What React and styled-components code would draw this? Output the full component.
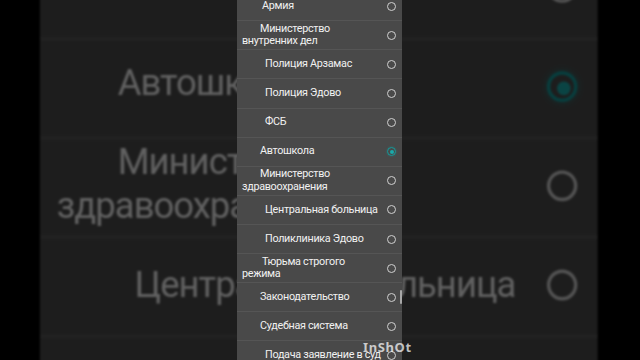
import React from 'react';
import styled, { createGlobalStyle } from 'styled-components';

const GlobalStyle = createGlobalStyle`
  html, body { margin: 0; padding: 0; background: #000; }
  body { font-family: Roboto, "Noto Sans", sans-serif; }
`;

const Stage = styled.div`
  position: relative;
  width: 640px;
  height: 360px;
  overflow: hidden;
  background: #000;
  display: grid;
  grid-template: 360px / 640px;
`;

const Layer = styled.div`
  grid-area: 1 / 1;
  display: flex;
  align-items: flex-start;
  padding-left: 222px;
`;

const Backdrop = styled(Layer)`
  transform: scale(3.38, 3.42);
  transform-origin: 319.8px 178.3px;
  filter: blur(0.35px) brightness(0.4);
`;

const Phone = styled.div`
  display: flex;
  height: 360px;
  background: #000;
  padding: 0 13px 0 15px;
`;

const Panel = styled.div`
  position: relative;
  width: 165px;
  height: 360px;
  background: #494949;
  overflow: hidden;
`;

const List = styled.ul`
  list-style: none;
  margin: -7.8px 0 0;
  padding: 0;
`;

const Row = styled.li`
  box-sizing: border-box;
  height: 29.1px;
  border-bottom: 1px solid #555555;
  display: flex;
  align-items: center;
  gap: 4px;
  padding: 0 6px 0 5px;
`;

const Label = styled.span`
  flex: 1;
  min-width: 0;
  color: #f1f1f1;
  font-family: Roboto, "Noto Sans", sans-serif;
  font-size: 10.8px;
  letter-spacing: -0.3px;
  line-height: 12.5px;
  text-indent: ${p => p.$indent}px;
  white-space: nowrap;
`;

const Radio = styled.span`
  flex: none;
  box-sizing: border-box;
  width: 9px;
  height: 9px;
  border-radius: 50%;
  border: 1.4px solid ${p => (p.$on ? '#129c9c' : '#d0d0d0')};
  display: grid;
  place-items: center;
  box-shadow: ${p => (p.$on ? '0 0 2px 0.5px rgba(20,160,160,0.3)' : 'none')};
  &::after {
    content: '';
    display: ${p => (p.$on ? 'block' : 'none')};
    width: 4px;
    height: 4px;
    border-radius: 50%;
    background: #1aabab;
  }
`;

const Scrollbar = styled.span`
  position: absolute;
  right: 0.5px;
  top: 290px;
  width: 1.5px;
  height: 14px;
  border-radius: 1px;
  background: #a8a8a8;
`;

const Watermark = styled.span`
  position: absolute;
  left: 363px;
  top: 338px;
  font-family: "Noto Sans", sans-serif;
  font-weight: 700;
  font-size: 13px;
  letter-spacing: 0.6px;
  color: rgba(255, 255, 255, 0.72);
`;

const items = [
  { lines: ['Армия'], indent: 20 },
  { lines: ['Министерство', 'внутренних дел'], indent: 18 },
  { lines: ['Полиция Арзамас'], indent: 23 },
  { lines: ['Полиция Эдово'], indent: 23 },
  { lines: ['ФСБ'], indent: 23 },
  { lines: ['Автошкола'], indent: 18, on: true },
  { lines: ['Министерство', 'здравоохранения'], indent: 18 },
  { lines: ['Центральная больница'], indent: 23 },
  { lines: ['Поликлиника Эдово'], indent: 23 },
  { lines: ['Тюрьма строгого', 'режима'], indent: 20 },
  { lines: ['Законодательство'], indent: 18 },
  { lines: ['Судебная система'], indent: 18 },
  { lines: ['Подача заявление в суд'], indent: 23 },
];

function Screen({ withScroll }) {
  return (
    <Phone>
      <Panel>
        <List>
          {items.map((it, i) => (
            <Row key={i}>
              <Label $indent={it.indent}>
                {it.lines.map((l, j) => (
                  <React.Fragment key={j}>
                    {j > 0 && <br />}
                    {l}
                  </React.Fragment>
                ))}
              </Label>
              <Radio $on={it.on} />
            </Row>
          ))}
        </List>
        {withScroll && <Scrollbar />}
      </Panel>
    </Phone>
  );
}

export default function App() {
  return (
    <>
      <GlobalStyle />
      <Stage>
        <Backdrop aria-hidden="true">
          <Screen />
        </Backdrop>
        <Layer>
          <Screen withScroll />
        </Layer>
        <Watermark>InShOt</Watermark>
      </Stage>
    </>
  );
}
